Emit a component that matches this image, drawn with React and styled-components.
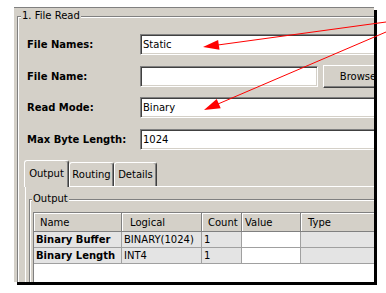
import React from "react";
import styled, { createGlobalStyle } from "styled-components";

const GlobalStyle = createGlobalStyle`
  html, body {
    margin: 0;
    padding: 0;
    background: #fff;
  }
  body {
    font-family: "DejaVu Sans", Verdana, sans-serif;
    font-size: 10px;
    color: #000;
  }
`;

const Page = styled.div`
  position: relative;
  width: 386px;
  height: 293px;
  box-sizing: border-box;
  padding: 7px 0 0 14px;
  overflow: hidden;
`;

const Window = styled.div`
  width: 360px;
  height: 275px;
  box-sizing: border-box;
  background: #d4d0c8;
  border-top: 1px solid #808080;
  box-shadow: 3px 3px 0 #000;
  overflow: hidden;
  padding: 8px 0 0 3px;
`;

const GroupBox = styled.div`
  width: ${({ $w }) => $w}px;
  height: ${({ $h }) => $h}px;
  border-top: 1px solid #808080;
  border-left: 1px solid #808080;
  box-shadow: inset 1px 1px 0 #fff;
`;

const Caption = styled.div`
  width: fit-content;
  height: 12px;
  line-height: 12px;
  margin: -7px 0 0 ${({ $offset }) => $offset}px;
  padding: 0 1px;
  background: #d4d0c8;
  white-space: nowrap;
`;

const Fields = styled.div`
  display: flex;
  flex-direction: column;
  gap: 10.5px;
  margin: 12px 0 0 9px;
`;

const Row = styled.div`
  display: flex;
  align-items: center;
  height: 21px;
`;

const Label = styled.div`
  width: 113px;
  flex-shrink: 0;
  font-weight: bold;
  white-space: nowrap;
`;

const TextBox = styled.div`
  width: ${({ $w }) => $w}px;
  height: 21px;
  flex-shrink: 0;
  box-sizing: border-box;
  display: flex;
  align-items: center;
  padding-left: 2px;
  background: #fff;
  border: 1px solid;
  border-color: #808080 #fff #fff #808080;
  box-shadow: inset 1px 1px 0 #404040, inset -1px -1px 0 #d4d0c8;
`;

const Button = styled.button`
  width: 70px;
  height: 23px;
  flex-shrink: 0;
  margin-left: 5px;
  padding: 0;
  box-sizing: border-box;
  font: inherit;
  color: #000;
  background: #d4d0c8;
  border: 1px solid;
  border-color: #fff #404040 #404040 #fff;
  box-shadow: inset -1px -1px 0 #808080;
`;

const TabArea = styled.div`
  margin: 10.5px 0 0 7px;
`;

const TabStrip = styled.div`
  position: relative;
  z-index: 1;
  display: flex;
  align-items: flex-end;
  height: 26px;
  margin-left: -1px;
`;

const Tab = styled.div`
  width: ${({ $w }) => $w}px;
  height: ${({ $active }) => ($active ? 27 : 24)}px;
  margin-bottom: ${({ $active }) => ($active ? -1 : 0)}px;
  padding-bottom: ${({ $active }) => ($active ? 2 : 0)}px;
  box-sizing: border-box;
  display: flex;
  align-items: center;
  justify-content: center;
  background: #d4d0c8;
  border-top: 1px solid #fff;
  border-left: 1px solid #fff;
  border-right: 1px solid #404040;
  border-radius: 3px 3px 0 0;
  box-shadow: inset -1px 0 0 #808080;
  white-space: nowrap;
`;

const TabPanel = styled.div`
  height: 200px;
  width: 400px;
  border-top: 1px solid #fff;
  border-left: 1px solid #fff;
  padding: 12px 0 0 3px;
`;

const Table = styled.div`
  width: 400px;
  height: 120px;
  margin: 7px 0 0 3px;
  background: #fff;
  border-top: 1px solid #808080;
  border-left: 1px solid #808080;
`;

const GridRow = styled.div`
  display: grid;
  grid-template-columns: 88px 80px 40px 59px 120px;
  height: ${({ $h }) => $h}px;
`;

const HeaderCell = styled.div`
  box-sizing: border-box;
  display: flex;
  align-items: center;
  padding-left: ${({ $pad }) => $pad}px;
  background: #d4d0c8;
  border-right: 1px solid #808080;
  border-bottom: 1px solid #808080;
  box-shadow: inset 1px 1px 0 #fff;
  white-space: nowrap;
`;

const Cell = styled.div`
  box-sizing: border-box;
  display: flex;
  align-items: center;
  padding-left: 2px;
  background: ${({ $white }) => ($white ? "#fff" : "#e4e4e4")};
  border-right: 1px solid #a0a0a0;
  border-bottom: 1px solid #a0a0a0;
  font-weight: ${({ $bold }) => ($bold ? "bold" : "normal")};
  white-space: nowrap;
  overflow: hidden;
`;

const Overlay = styled.svg`
  position: absolute;
  left: 0;
  top: 0;
  pointer-events: none;
`;

const columns = [
  { name: "Name", pad: 6 },
  { name: "Logical", pad: 8 },
  { name: "Count", pad: 6 },
  { name: "Value", pad: 3 },
  { name: "Type", pad: 7 },
];

const rows = [
  ["Binary Buffer", "BINARY(1024)", "1", "", ""],
  ["Binary Length", "INT4", "1", "", ""],
];

const tabs = [
  { name: "Output", w: 45, active: true },
  { name: "Routing", w: 45 },
  { name: "Details", w: 43 },
];

const App = () => {
  return (
    <Page>
      <GlobalStyle />
      <Window>
        <GroupBox $w={420} $h={300}>
          <Caption $offset={3}>1. File Read</Caption>
          <Fields>
            <Row>
              <Label>File Names:</Label>
              <TextBox $w={260}>Static</TextBox>
            </Row>
            <Row>
              <Label>File Name:</Label>
              <TextBox $w={178} />
              <Button>Browse</Button>
            </Row>
            <Row>
              <Label>Read Mode:</Label>
              <TextBox $w={260}>Binary</TextBox>
            </Row>
            <Row>
              <Label>Max Byte Length:</Label>
              <TextBox $w={260}>1024</TextBox>
            </Row>
          </Fields>

          <TabArea>
            <TabStrip>
              {tabs.map((t) => (
                <Tab key={t.name} $w={t.w} $active={t.active}>
                  {t.name}
                </Tab>
              ))}
            </TabStrip>
            <TabPanel>
              <GroupBox $w={400} $h={200}>
                <Caption $offset={2}>Output</Caption>
                <Table>
                  <GridRow $h={19}>
                    {columns.map((c) => (
                      <HeaderCell key={c.name} $pad={c.pad}>
                        {c.name}
                      </HeaderCell>
                    ))}
                  </GridRow>
                  {rows.map((r) => (
                    <GridRow key={r[0]} $h={16}>
                      {r.map((v, i) => (
                        <Cell key={i} $bold={i === 0} $white={i === 3}>
                          {v}
                        </Cell>
                      ))}
                    </GridRow>
                  ))}
                </Table>
              </GroupBox>
            </TabPanel>
          </TabArea>
        </GroupBox>
      </Window>

      <Overlay width="386" height="293" viewBox="0 0 386 293">
        <line x1="386" y1="22" x2="212" y2="45.8" stroke="#ff0000" strokeWidth="1" />
        <polygon points="203,47 219.5,49.7 218.1,39.9" fill="#ff0000" />
        <line x1="386" y1="32" x2="214" y2="105.7" stroke="#ff0000" strokeWidth="1" />
        <polygon points="204,110 220.7,108.3 216.7,99.1" fill="#ff0000" />
      </Overlay>
    </Page>
  );
};

export default App;
